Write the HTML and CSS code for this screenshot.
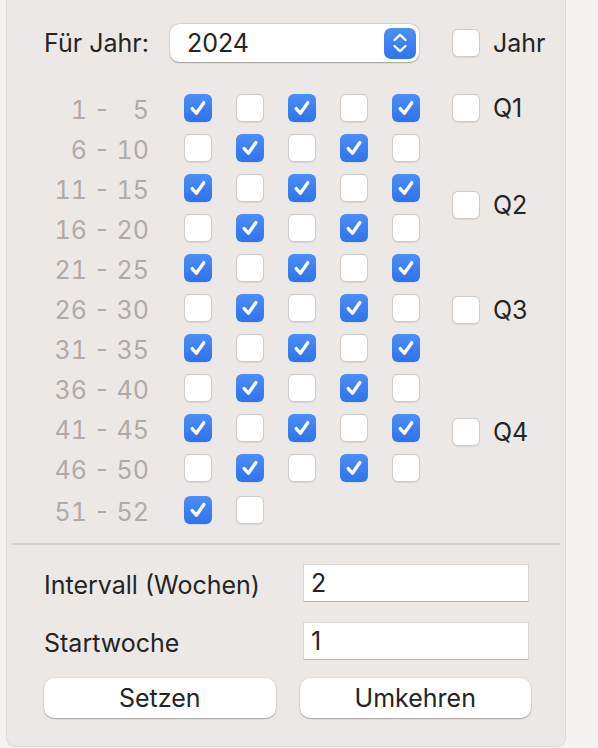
FILE: index.html
```html
<!DOCTYPE html>
<html lang="de">
<head>
<meta charset="UTF-8">
<meta name="viewport" content="width=device-width, initial-scale=1.0">
<title>Wochen auswählen</title>
<link rel="stylesheet" href="styles.css">
</head>
<body>
<svg class="defs" width="0" height="0">
  <symbol id="chk" viewBox="0 0 28 28">
    <path d="M8.2 14.6 L12.4 19.2 L19.8 8.6" fill="none" stroke="#fff" stroke-width="3.4" stroke-linecap="round" stroke-linejoin="round"/>
  </symbol>
</svg>

<div class="panel">
  <div class="year-row">
    <span class="year-label">Für Jahr:</span>
    <div class="popup">
      <span>2024</span>
      <span class="stepper">
        <svg width="32" height="30" viewBox="0 0 32 30">
          <path d="M10.5 12 L16 6.8 L21.5 12 M10.5 18 L16 23.2 L21.5 18" fill="none" stroke="#fff" stroke-width="2.4" stroke-linecap="round" stroke-linejoin="round"/>
        </svg>
      </span>
    </div>
    <span class="cb"></span>
    <span class="side-label">Jahr</span>
  </div>

  <div class="weeks">
    <div class="grid">
      <span class="range">&#8199;1 - &#8199;5</span>
      <span class="cb on"><svg><use href="#chk"/></svg></span><span class="cb"></span><span class="cb on"><svg><use href="#chk"/></svg></span><span class="cb"></span><span class="cb on"><svg><use href="#chk"/></svg></span>
      <span class="range">&#8199;6 - 10</span>
      <span class="cb"></span><span class="cb on"><svg><use href="#chk"/></svg></span><span class="cb"></span><span class="cb on"><svg><use href="#chk"/></svg></span><span class="cb"></span>
      <span class="range">11 - 15</span>
      <span class="cb on"><svg><use href="#chk"/></svg></span><span class="cb"></span><span class="cb on"><svg><use href="#chk"/></svg></span><span class="cb"></span><span class="cb on"><svg><use href="#chk"/></svg></span>
      <span class="range">16 - 20</span>
      <span class="cb"></span><span class="cb on"><svg><use href="#chk"/></svg></span><span class="cb"></span><span class="cb on"><svg><use href="#chk"/></svg></span><span class="cb"></span>
      <span class="range">21 - 25</span>
      <span class="cb on"><svg><use href="#chk"/></svg></span><span class="cb"></span><span class="cb on"><svg><use href="#chk"/></svg></span><span class="cb"></span><span class="cb on"><svg><use href="#chk"/></svg></span>
      <span class="range">26 - 30</span>
      <span class="cb"></span><span class="cb on"><svg><use href="#chk"/></svg></span><span class="cb"></span><span class="cb on"><svg><use href="#chk"/></svg></span><span class="cb"></span>
      <span class="range">31 - 35</span>
      <span class="cb on"><svg><use href="#chk"/></svg></span><span class="cb"></span><span class="cb on"><svg><use href="#chk"/></svg></span><span class="cb"></span><span class="cb on"><svg><use href="#chk"/></svg></span>
      <span class="range">36 - 40</span>
      <span class="cb"></span><span class="cb on"><svg><use href="#chk"/></svg></span><span class="cb"></span><span class="cb on"><svg><use href="#chk"/></svg></span><span class="cb"></span>
      <span class="range">41 - 45</span>
      <span class="cb on"><svg><use href="#chk"/></svg></span><span class="cb"></span><span class="cb on"><svg><use href="#chk"/></svg></span><span class="cb"></span><span class="cb on"><svg><use href="#chk"/></svg></span>
      <span class="range">46 - 50</span>
      <span class="cb"></span><span class="cb on"><svg><use href="#chk"/></svg></span><span class="cb"></span><span class="cb on"><svg><use href="#chk"/></svg></span><span class="cb"></span>
      <span class="range last">51 - 52</span>
      <span class="cb on last"><svg><use href="#chk"/></svg></span><span class="cb last"></span>
    </div>

    <div class="quarters">
      <div class="quarter q1"><span class="cb"></span><span class="side-label">Q1</span></div>
      <div class="quarter q2"><span class="cb"></span><span class="side-label">Q2</span></div>
      <div class="quarter q3"><span class="cb"></span><span class="side-label">Q3</span></div>
      <div class="quarter q4"><span class="cb"></span><span class="side-label">Q4</span></div>
    </div>
  </div>

  <hr class="divider">

  <div class="settings">
    <div class="field-row">
      <span>Intervall (Wochen)</span>
      <input class="field" type="text" value="2">
    </div>
    <div class="field-row">
      <span>Startwoche</span>
      <input class="field" type="text" value="1">
    </div>
    <div class="buttons">
      <button>Setzen</button>
      <button>Umkehren</button>
    </div>
  </div>
</div>
</body>
</html>
```

FILE: styles.css
```css
body {
  margin: 0;
  background-color: #f4f1ee;
  font-family: Inter, "Liberation Sans", sans-serif;
  font-size: 25px;
  color: #242424;
}
.defs {
  position: absolute;
}
.panel {
  margin-left: 6px;
  width: 560px;
  height: 747px;
  box-sizing: border-box;
  background-color: #ece8e5;
  border: 1px solid #dcd8d4;
  border-top: none;
  border-radius: 0 0 9px 9px;
  padding-top: 24px;
}
.year-row {
  display: flex;
  align-items: center;
  height: 38px;
  padding-left: 37px;
}
.year-label {
  width: 126px;
}
.popup {
  width: 249px;
  height: 38px;
  box-sizing: border-box;
  background-color: #fff;
  border-radius: 9px;
  box-shadow: 0 0.5px 1.5px rgba(0, 0, 0, 0.3), 0 0 0 0.5px rgba(0, 0, 0, 0.06);
  display: flex;
  align-items: center;
  justify-content: space-between;
  padding: 0 3px 0 17px;
  margin-right: 33px;
}
.stepper {
  width: 32px;
  height: 31px;
  border-radius: 7px;
  background: linear-gradient(#4d90f7, #2f74ee);
  display: flex;
}
.cb {
  width: 28px;
  height: 28px;
  box-sizing: border-box;
  background-color: #fff;
  border: 1px solid #cfcbc7;
  border-radius: 6px;
  box-shadow: 0 0.5px 1px rgba(0, 0, 0, 0.08);
  display: inline-block;
  flex-shrink: 0;
}
.cb.on {
  background: linear-gradient(#4b8ef7, #2d73ed);
  border: none;
}
.cb svg {
  width: 28px;
  height: 28px;
  display: block;
}
.side-label {
  margin-left: 13px;
}
.weeks {
  display: flex;
  padding-left: 37px;
  margin-top: 32px;
}
.grid {
  display: grid;
  grid-template-columns: 116px repeat(5, 28px);
  grid-auto-rows: 28px;
  column-gap: 24px;
  row-gap: 12px;
}
.range {
  color: #afaba8;
  text-align: right;
  padding-right: 11px;
  padding-top: 2px;
  white-space: pre;
  font-variant-numeric: tabular-nums;
  line-height: 28px;
}
.last {
  margin-top: 2px;
}
.quarters {
  margin-left: 32px;
  display: flex;
  flex-direction: column;
}
.quarter {
  display: flex;
  align-items: center;
  height: 28px;
}
.q2 {
  margin-top: 69px;
}
.q3 {
  margin-top: 77px;
}
.q4 {
  margin-top: 94px;
}
.divider {
  border: none;
  height: 2px;
  background-color: #d7d3d0;
  margin: 21px 5px 0;
}
.settings {
  padding: 19px 34px 0 37px;
}
.field-row {
  display: flex;
  align-items: center;
  justify-content: space-between;
  margin-bottom: 20px;
  padding-right: 2px;
}
.field-row span {
  padding-top: 3px;
}
.field {
  width: 226px;
  height: 38px;
  box-sizing: border-box;
  border: 1px solid #d9d6d3;
  border-bottom-color: #b8b4b1;
  background-color: #fff;
  font: inherit;
  color: #242424;
  padding: 0 7px;
  outline: none;
}
.buttons {
  display: grid;
  grid-template-columns: 1fr 1fr;
  column-gap: 24px;
  margin-top: -2px;
}
button {
  height: 40px;
  font: inherit;
  color: #242424;
  background-color: #fff;
  border: none;
  border-radius: 10px;
  box-shadow: 0 1px 1.5px rgba(0, 0, 0, 0.28), 0 0 0 0.5px rgba(0, 0, 0, 0.08);
}
```
